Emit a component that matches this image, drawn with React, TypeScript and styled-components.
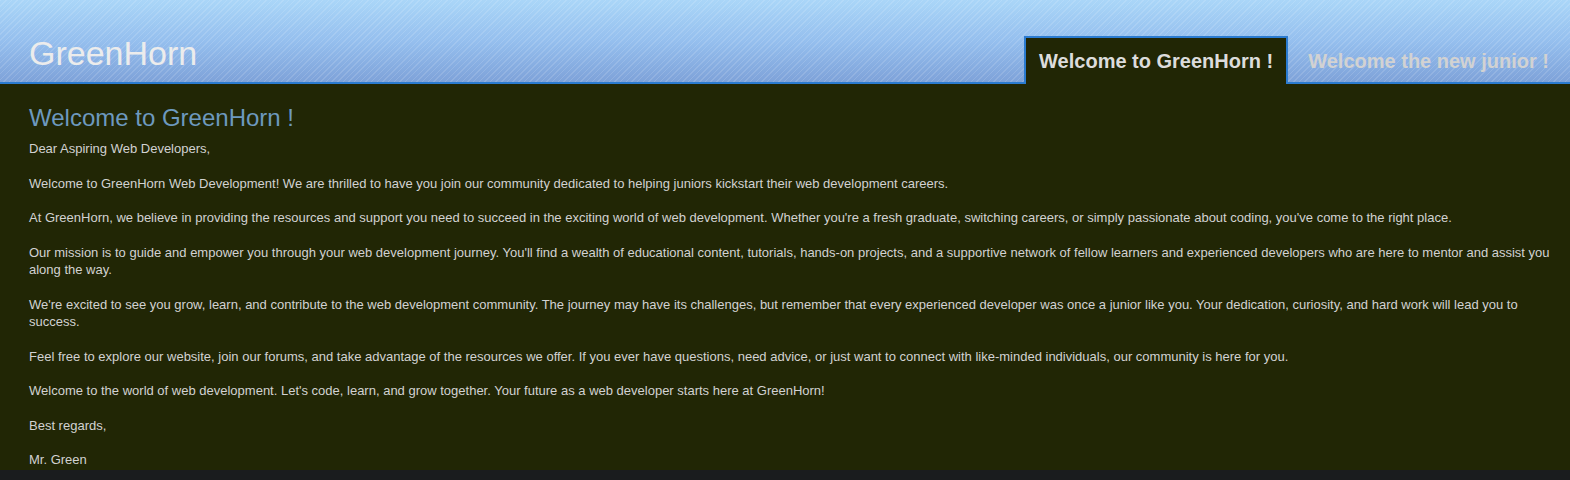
import React from "react";
import styled, { createGlobalStyle } from "styled-components";

const Global = createGlobalStyle`
  html, body { margin: 0; padding: 0; background: #1a1c1e; }
  body { font-family: "Liberation Sans", Arial, sans-serif; }
`;

const Header = styled.header`
  height: 82px;
  border-bottom: 2px solid #2b7bd0;
  background:
    repeating-linear-gradient(135deg, rgba(255,255,255,0.13) 0 1px, rgba(255,255,255,0) 1px 4px),
    linear-gradient(180deg, #aad6f8 0%, #95bfee 50%, #7ea2d9 100%);
  display: flex;
  align-items: flex-end;
  justify-content: space-between;
  padding: 0 6px 0 29px;
`;

const Logo = styled.div`
  align-self: flex-start;
  margin-top: 33px;
  font-size: 34px;
  line-height: 40px;
  color: #ececec;
`;

const Nav = styled.nav`
  display: flex;
  gap: 5px;
  margin-bottom: -2px;
`;

const Tab = styled.div<{ $active?: boolean }>`
  box-sizing: border-box;
  height: 48px;
  padding: 0 13px 0 13px;
  display: flex;
  align-items: center;
  font-size: 20px;
  font-weight: bold;
  color: ${(p) => (p.$active ? "#dcdcdc" : "#d2d2d2")};
  background: ${(p) => (p.$active ? "#212605" : "transparent")};
  border: 2px solid ${(p) => (p.$active ? "#2b7bd0" : "transparent")};
  border-bottom: none;
`;

const Main = styled.main`
  background: #212605;
  padding: 20px 20px 1px 29px;
  color: #d2d2d2;
`;

const Title = styled.h1`
  margin: 0 0 9px;
  font-size: 24px;
  font-weight: normal;
  color: #6d99bf;
  line-height: 27px;
`;

const Para = styled.p`
  margin: 0 0 17.3px;
  font-size: 13px;
  line-height: 17.3px;
  &:last-child { margin-bottom: 0; }
`;

const paras = [
  "Dear Aspiring Web Developers,",
  "Welcome to GreenHorn Web Development! We are thrilled to have you join our community dedicated to helping juniors kickstart their web development careers.",
  "At GreenHorn, we believe in providing the resources and support you need to succeed in the exciting world of web development. Whether you're a fresh graduate, switching careers, or simply passionate about coding, you've come to the right place.",
  "Our mission is to guide and empower you through your web development journey. You'll find a wealth of educational content, tutorials, hands-on projects, and a supportive network of fellow learners and experienced developers who are here to mentor and assist you along the way.",
  "We're excited to see you grow, learn, and contribute to the web development community. The journey may have its challenges, but remember that every experienced developer was once a junior like you. Your dedication, curiosity, and hard work will lead you to success.",
  "Feel free to explore our website, join our forums, and take advantage of the resources we offer. If you ever have questions, need advice, or just want to connect with like-minded individuals, our community is here for you.",
  "Welcome to the world of web development. Let's code, learn, and grow together. Your future as a web developer starts here at GreenHorn!",
  "Best regards,",
  "Mr. Green",
];

export default function App() {
  return (
    <>
      <Global />
      <Header>
        <Logo>GreenHorn</Logo>
        <Nav>
          <Tab $active>Welcome to GreenHorn !</Tab>
          <Tab>Welcome the new junior !</Tab>
        </Nav>
      </Header>
      <Main>
        <Title>Welcome to GreenHorn !</Title>
        {paras.map((t, i) => (
          <Para key={i}>{t}</Para>
        ))}
      </Main>
    </>
  );
}
